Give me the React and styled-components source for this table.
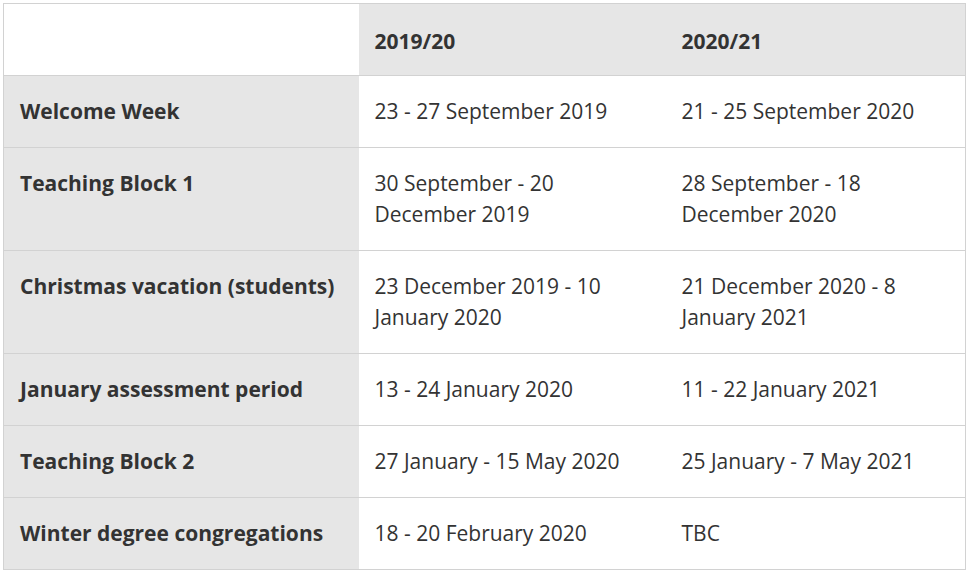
import React from "react";
import styled, { createGlobalStyle } from "styled-components";

const Global = createGlobalStyle`
  html, body { margin: 0; padding: 0; background: #ffffff; }
  body { font-family: "Open Sans", "Noto Sans", sans-serif; color: #333333; }
`;

const Wrap = styled.div`
  padding: 3px 2px 0 3px;
`;

const Table = styled.table`
  width: 962px;
  border-collapse: collapse;
  border: 1px solid #d2d2d2;
  table-layout: fixed;
  font-size: 21px;
  line-height: 31px;
`;

const Cell = styled.td`
  padding: 20px 16px 20px 16px;
  vertical-align: top;
  text-align: left;
  border-top: 1px solid #d2d2d2;
  background: ${(p) => (p.$shade ? "#e6e6e6" : "#ffffff")};
  font-weight: ${(p) => (p.$bold ? 700 : 400)};
  color: #333333;
`;

const Head = styled(Cell).attrs({ as: "th" })`
  padding-top: 22px;
  padding-bottom: 18px;
`;

const rows = [
  ["Welcome Week", "23 - 27 September 2019", "21 - 25 September 2020"],
  ["Teaching Block 1", "30 September - 20 December 2019", "28 September - 18 December 2020"],
  ["Christmas vacation (students)", "23 December 2019 - 10 January 2020", "21 December 2020 - 8 January 2021"],
  ["January assessment period", "13 - 24 January 2020", "11 - 22 January 2021"],
  ["Teaching Block 2", "27 January - 15 May 2020", "25 January - 7 May 2021"],
  ["Winter degree congregations", "18 - 20 February 2020", "TBC"],
];

export default function App() {
  return (
    <Wrap>
      <Global />
      <Table>
        <colgroup>
          <col style={{ width: 355 }} />
          <col style={{ width: 307 }} />
          <col style={{ width: 300 }} />
        </colgroup>
        <thead>
          <tr>
            <Head $bold></Head>
            <Head $bold $shade>2019/20</Head>
            <Head $bold $shade>2020/21</Head>
          </tr>
        </thead>
        <tbody>
          {rows.map((r) => (
            <tr key={r[0]}>
              <Cell $bold $shade>{r[0]}</Cell>
              <Cell>{r[1]}</Cell>
              <Cell>{r[2]}</Cell>
            </tr>
          ))}
        </tbody>
      </Table>
    </Wrap>
  );
}
